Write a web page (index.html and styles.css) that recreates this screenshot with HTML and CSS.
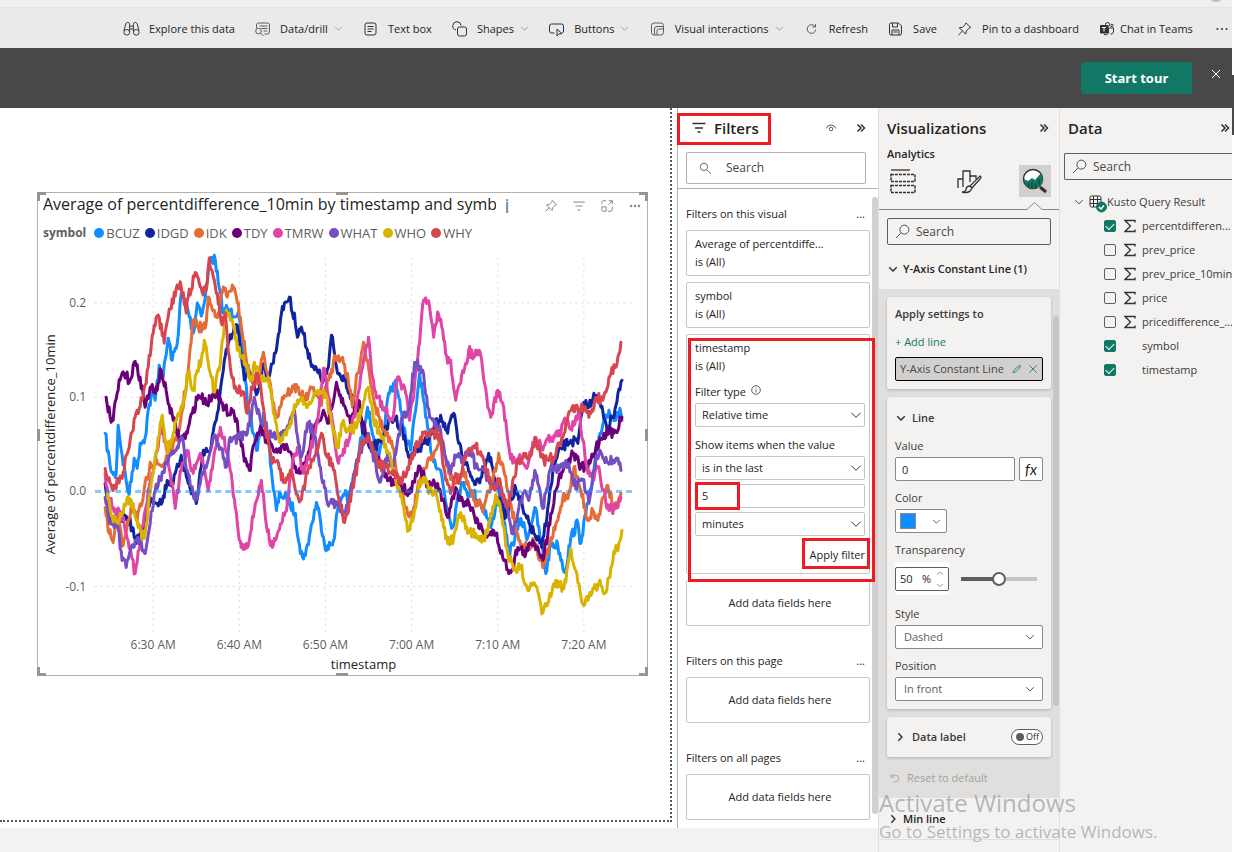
FILE: index.html
```html
<!DOCTYPE html>
<html lang="en">
<head>
<meta charset="utf-8">
<title>Report editor</title>
<link rel="stylesheet" href="styles.css">
</head>
<body>
<svg class="defs" aria-hidden="true">
  <symbol id="chev" viewBox="0 0 12 12"><path d="M1.5 3.8 6 8.3l4.500-4.500"/></symbol>
  <symbol id="chev-right" viewBox="0 0 12 12"><path d="M4 1.500 8.300 6 4 10.500"/></symbol>
  <symbol id="dbl" viewBox="0 0 10 10"><path d="M1.500 1.500 5 5 1.500 8.500M5 1.500 8.500 5 5 8.500"/></symbol>
  <symbol id="lens" viewBox="0 0 16 16"><circle cx="10" cy="6" r="4.800"/><path d="M6.500 9.500 1 15"/></symbol>
  <symbol id="pin" viewBox="0 0 16 16"><path d="M9.500 1.800 14.200 6.500 12.500 7.200 9.800 10l-.6 3.200L2.800 6.800 6 6.200 8.800 3.500zM6 10 1.800 14.200"/></symbol>
  <symbol id="sigma" viewBox="0 0 12 14"><path d="M11 3.500V1.500H1L6.500 7 1 12.500h10v-2"/></symbol>
</svg>
<div class="app">
  <div class="strip"><span class="avatar"></span></div>
  <nav class="toolbar" aria-label="Report tools">
    <button><svg class="ic" viewBox="0 0 18 16"><path d="M1 10 3 2.500Q3.500 1 5 1t2 1.500V11M17 10 15 2.500Q14.500 1 13 1t-2 1.500V11M7 5h4M7 8h4"/><circle cx="4" cy="11.500" r="3"/><circle cx="14" cy="11.500" r="3"/></svg>Explore this data</button>
    <button><svg class="ic light" viewBox="0 0 16 16"><path d="M2 7V4q0-2 2-2h9q2 0 2 2v7q0 2-2 2h-3M5 5h8M7 7.500h6M9 10h4"/><circle cx="4" cy="10" r="2.800"/><path d="m6 12 3 3"/></svg>Data/drill<svg class="chev"><use href="#chev"/></svg></button>
    <button><svg class="ic" viewBox="0 0 16 16"><rect x="2.500" y="2" width="11" height="12" rx="2"/><path d="M5 5.500h6M5 8h6M5 10.500h4"/></svg>Text box</button>
    <button><svg class="ic" viewBox="0 0 16 16"><path d="M4.500 9A4.200 4.200 0 1 1 9.600 4.500"/><rect x="6" y="6" width="9" height="9" rx="2"/></svg>Shapes<svg class="chev"><use href="#chev"/></svg></button>
    <button><svg class="ic" viewBox="0 0 16 16"><path d="M6 12H3q-2 0-2-2V5q0-2 2-2h10q2 0 2 2v5q0 1.500-1.500 2M8.500 8v7l2-2.200h3z"/></svg>Buttons<svg class="chev"><use href="#chev"/></svg></button>
    <button><svg class="ic light" viewBox="0 0 16 16"><path d="M4.500 14Q2 14 2 11.500v-7Q2 2 4.500 2h7Q14 2 14 4.500V11.500Q14 14 11.500 14zM5 13.500V8Q5 5.500 7.500 5.500H14"/><path d="M7.500 14V9.500Q7.500 8 9 8h5"/></svg>Visual interactions<svg class="chev"><use href="#chev"/></svg></button>
    <button><svg class="ic light" viewBox="0 0 16 16"><path d="M11.500 5.500A4.300 4.300 0 1 0 12.300 8.500M12 3v3H9"/></svg>Refresh</button>
    <button><svg class="ic" viewBox="0 0 16 16"><path d="M2 3.500Q2 2 3.500 2H11l3 3v7.500q0 1.500-1.500 1.500h-9Q2 14 2 12.500zM5 2v4h5V2M4.500 14V9h7v5M6 11h4"/></svg>Save</button>
    <button><svg class="ic"><use href="#pin"/></svg>Pin to a dashboard</button>
    <button class="teams"><svg class="ic" viewBox="0 0 16 16"><circle cx="9" cy="3.500" r="2"/><circle cx="13.500" cy="4.500" r="1.300"/><path d="M9 7h6v4q-1 2.500-3 2M10 7v5q-1.500 3-4.500 1.500"/><path class="solid" d="M2 4.500h7v7.500H2z"/><path class="inv" d="M3.500 6.500h4M5.500 6.500v4"/></svg>Chat in Teams</button>
    <button aria-label="More"><svg class="dots" viewBox="0 0 12 4"><circle cx="1.500" cy="2" r="1"/><circle cx="6" cy="2" r="1"/><circle cx="10.500" cy="2" r="1"/></svg></button>
  </nav>
  <div class="banner">
    <button class="tour">Start tour</button>
    <button class="close" aria-label="Close"><svg viewBox="0 0 10 10"><path d="m1 1 8 8M9 1 1 9"/></svg></button>
  </div>
  <main class="main">
    <div class="left">
      <div class="work">
        <section class="canvas">
          <article class="visual">
            <span class="h tl"></span><span class="h tc"></span><span class="h tr"></span><span class="h ml"></span><span class="h mr"></span><span class="h bl"></span><span class="h bc"></span><span class="h br"></span>
            <header class="vhead">
              <h2>Average of percentdifference_10min by timestamp and symbol</h2>
              <span class="info">i</span>
              <span class="vtools">
                <svg class="g"><use href="#pin"/></svg>
                <svg class="g" viewBox="0 0 16 16"><path d="M1.500 3.500h13M4 8h8M6.500 12.500h3"/></svg>
                <svg class="g" viewBox="0 0 16 16"><path d="M7 2H4Q2 2 2 4v2M14 9v3q0 2-2 2H9M10 2h4v4M14 2 9.500 6.500M2 9h5v5H4q-2 0-2-2z"/></svg>
                <svg class="g fill" viewBox="0 0 16 16"><circle cx="3.500" cy="8" r="1.400"/><circle cx="8" cy="8" r="1.400"/><circle cx="12.500" cy="8" r="1.400"/></svg>
              </span>
            </header>
            <ul class="legend">
              <li class="name">symbol</li>
              <li><i class="c-bcuz"></i>BCUZ</li><li><i class="c-idgd"></i>IDGD</li><li><i class="c-idk"></i>IDK</li><li><i class="c-tdy"></i>TDY</li><li><i class="c-tmrw"></i>TMRW</li><li><i class="c-what"></i>WHAT</li><li><i class="c-who"></i>WHO</li><li><i class="c-why"></i>WHY</li>
            </ul>
            <svg class="plot" id="plot" viewBox="38 243 608 431" role="img" aria-label="Line chart of average percent difference over time, by symbol">
              <path class="grid" d="M153 258V636M239 258V636M325 258V636M411 258V636M497 258V636M583 258V636M95 303H631M95 397H631M95 586H631"/>
              <g class="ytick"><text x="86" y="307">0.2</text><text x="86" y="401">0.1</text><text x="86" y="495">0.0</text><text x="86" y="590">-0.1</text></g>
              <g class="xtick"><text x="153" y="648">6:30 AM</text><text x="239" y="648">6:40 AM</text><text x="325" y="648">6:50 AM</text><text x="411" y="648">7:00 AM</text><text x="497" y="648">7:10 AM</text><text x="583" y="648">7:20 AM</text></g>
              <text class="atitle" x="363" y="668">timestamp</text>
              <text class="atitle" transform="translate(55 444) rotate(-90)">Average of percentdifference_10min</text>
              <g id="lines"></g>
              <path class="zero" d="M95 491H631"/>
            </svg>
          </article>
        </section>
        <aside class="filters">
          <header class="fhead">
            <svg class="fi" viewBox="0 0 16 16"><path d="M1.500 3.500h13M4 8h8M6.500 12h3"/></svg>
            <h2>Filters</h2>
            <svg class="eye" viewBox="0 0 12 10"><path d="M1 5.500Q2.500 2 6 2t5 3.500"/><circle cx="6" cy="6" r="1.800"/></svg>
            <svg class="dbl"><use href="#dbl"/></svg>
            <span class="mark mark-title"></span>
          </header>
          <label class="search fsearch"><svg viewBox="0 0 16 16"><circle cx="6" cy="6" r="4.500"/><path d="m9.500 9.500 5 5"/></svg><input type="text" placeholder="Search"></label>
          <div class="fbody">
            <section class="fsec">
              <h3>Filters on this visual<button aria-label="More">...</button></h3>
              <div class="fcard"><p>Average of percentdiffe...</p><p>is (All)</p></div>
              <div class="fcard"><p>symbol</p><p>is (All)</p></div>
              <div class="fcard open">
                <p>timestamp</p><p>is (All)</p>
                <label class="flabel" for="ftype">Filter type <svg viewBox="0 0 10 10"><circle cx="5" cy="5" r="4.300"/><path d="M5 4.500V7.500M5 2.500v1"/></svg></label>
                <span class="sel"><select id="ftype"><option>Relative time</option></select><svg><use href="#chev"/></svg></span>
                <label class="flabel two" for="fwhen">Show items when the value</label>
                <span class="sel"><select id="fwhen"><option>is in the last</option></select><svg><use href="#chev"/></svg></span>
                <span class="num"><input type="text" value="5" aria-label="Amount"><span class="mark mark-num"></span></span>
                <span class="sel"><select aria-label="Unit"><option>minutes</option></select><svg><use href="#chev"/></svg></span>
                <button class="apply">Apply filter<span class="mark mark-apply"></span></button>
                <span class="mark mark-card"></span>
              </div>
              <div class="fcard drop">Add data fields here</div>
            </section>
            <section class="fsec">
              <h3>Filters on this page<button aria-label="More">...</button></h3>
              <div class="fcard drop">Add data fields here</div>
            </section>
            <section class="fsec">
              <h3>Filters on all pages<button aria-label="More">...</button></h3>
              <div class="fcard drop">Add data fields here</div>
            </section>
            <span class="bar fbar"></span>
          </div>
        </aside>
      </div>
      <div class="foot"></div>
    </div>
    <aside class="viz">
      <header class="phead"><h2>Visualizations</h2><svg class="dbl"><use href="#dbl"/></svg></header>
      <h3 class="sub">Analytics</h3>
      <div class="tabs">
        <button aria-label="Build visual"><svg viewBox="0 0 32 32"><path class="t2" d="M4 5h19"/><path class="dash" d="M4 9.500h24v7H4zM4 20.500h24v7H4z"/></svg></button>
        <button aria-label="Format visual"><svg viewBox="0 0 32 32"><path d="M5 23V14h5M10 22V6h7v11M17 11h6v3M27 11q2 1 0 3l-8 9-2-2zM17 21q-4 0-4 4-1 2-4 2 8 2 10-4"/></svg></button>
        <button class="on" aria-label="Analytics"><svg viewBox="0 0 32 32"><circle class="disc" cx="14" cy="14" r="9.500"/><path class="area" d="M5 14l4 2 4-3 3 2 6-7q4 7-1 13-6 5-12 1-4-3-4-8z"/><path class="bars" d="M9.500 18v4M13 17v6M16.500 18v5M20 14v6"/><path class="hand" d="m21 22 6 5"/></svg></button>
      </div>
      <svg class="notch" viewBox="0 0 181 9" preserveAspectRatio="xMaxYMid slice"><path d="M-400 8.500H149L156.500 1.500 164 8.500H190"/></svg>
      <label class="search vsearch"><svg><use href="#lens"/></svg><input type="text" placeholder="Search"></label>
      <button class="sect"><svg class="chev2"><use href="#chev"/></svg>Y-Axis Constant Line (1)</button>
      <div class="settings">
        <div class="card apply-to">
          <h4>Apply settings to</h4>
          <button class="add">+ Add line</button>
          <button class="chip"><span>Y-Axis Constant Line 1</span><svg viewBox="0 0 12 12"><path d="m1.500 10.500.8-2.800 6-6q1-.7 1.800.2.700.8 0 1.600L4.200 9.700zM7.500 3l1.600 1.600"/></svg><svg viewBox="0 0 12 12"><path d="m1.500 1.500 9 9M10.500 1.500l-9 9"/></svg></button>
        </div>
        <div class="card line">
          <h4><svg class="chev2"><use href="#chev"/></svg>Line</h4>
          <label for="val">Value</label>
          <div class="row"><input id="val" class="box" type="text" value="0"><button class="fx" aria-label="Conditional formatting"><i>fx</i></button></div>
          <label for="col">Color</label>
          <button id="col" class="color"><i></i><svg><use href="#chev"/></svg></button>
          <label for="tra">Transparency</label>
          <div class="row trans">
            <span class="pct"><input id="tra" type="text" value="50"><b>%</b><svg viewBox="0 0 8 20"><path d="M1 5.500 4 3l3 2.500M1 15l3 2.500L7 15"/></svg></span>
            <input class="slider" type="range" value="50" aria-label="Transparency slider">
          </div>
          <label class="after" for="sty">Style</label>
          <span class="sel dark"><select id="sty"><option>Dashed</option></select><svg><use href="#chev"/></svg></span>
          <label for="pos">Position</label>
          <span class="sel dark"><select id="pos"><option>In front</option></select><svg><use href="#chev"/></svg></span>
        </div>
        <div class="card dlabel"><svg class="chev2"><use href="#chev-right"/></svg><h4>Data label</h4><button class="toggle" role="switch" aria-checked="false"><i></i>Off</button></div>
        <button class="reset"><svg viewBox="0 0 12 12"><path d="M1.500 1v4h4M1.500 5q0-2.500 5-2.500 4 .5 4 4t-4 4H4"/></svg>Reset to default</button>
        <span class="bar vbar"></span>
      </div>
      <button class="sect min"><svg class="chev2"><use href="#chev-right"/></svg>Min line</button>
    </aside>
    <aside class="data">
      <header class="phead"><h2>Data</h2><svg class="dbl"><use href="#dbl"/></svg></header>
      <label class="search dsearch"><svg><use href="#lens"/></svg><input type="text" placeholder="Search"></label>
      <div class="table"><svg class="tchev"><use href="#chev"/></svg><svg class="tico" viewBox="0 0 18 18"><rect x="1" y="1" width="11" height="11" rx="1.500"/><path d="M1 4.500h11M1 8.500h11M4.500 1v11M8.500 1v11"/><circle cx="12.500" cy="12" r="5"/><path class="w" d="m10 12 2 2 3-3.500"/></svg>Kusto Query Result</div>
      <label class="field"><input type="checkbox" checked><svg><use href="#sigma"/></svg><span>percentdifferen...</span></label>
      <label class="field"><input type="checkbox"><svg><use href="#sigma"/></svg><span>prev_price</span></label>
      <label class="field"><input type="checkbox"><svg><use href="#sigma"/></svg><span>prev_price_10min</span></label>
      <label class="field"><input type="checkbox"><svg><use href="#sigma"/></svg><span>price</span></label>
      <label class="field"><input type="checkbox"><svg><use href="#sigma"/></svg><span>pricedifference_...</span></label>
      <label class="field"><input type="checkbox" checked><svg></svg><span>symbol</span></label>
      <label class="field"><input type="checkbox" checked><svg></svg><span>timestamp</span></label>
    </aside>
  </main>
  <div class="watermark"><strong>Activate Windows</strong><span>Go to Settings to activate Windows.</span></div>
</div>
<script src="chart.js"></script>
</body>
</html>
```
FILE: styles.css
```css
* { box-sizing: border-box; }
body { margin: 0; font-family: "Open Sans", "Noto Sans", sans-serif; font-size: 12px; line-height: 18px; color: #252423; background: #fff; }
h2, h3, h4, p, ul { margin: 0; padding: 0; font-size: inherit; font-weight: 400; list-style: none; }
button, input, select { font: inherit; color: inherit; background: none; border: 0; padding: 0; margin: 0; min-width: 0; }
button { white-space: nowrap; text-align: left; }
svg { fill: none; stroke: #323130; stroke-width: 1; flex: none; }
.defs { display: block; width: 0; height: 0; }
.app { position: relative; display: flex; flex-direction: column; min-height: 100vh; padding-right: 2px; overflow: hidden; background: linear-gradient(#fff 75px, #484848 75px, #484848 135px, #fff 135px); }

.strip { display: flex; justify-content: flex-end; height: 8px; padding-right: 8px; background: #f0f0f0; border-bottom: 1px solid #e2e2e2; overflow: hidden; }
.avatar { width: 16px; height: 16px; margin-top: -14px; border-radius: 8px; background: #bdbdbd; }
.toolbar { display: flex; align-items: center; justify-content: space-between; height: 40px; padding: 1px 4px 0 123px; background: #eaeaea; font-size: 11px; }
.toolbar button { display: flex; align-items: center; gap: 9px; }
.toolbar .teams { gap: 5px; margin-right: 4px; }
.ic { width: 17px; height: 16px; }
.ic.light { stroke: #605e5c; }
.ic .solid { fill: #323130; }
.ic .inv { stroke: #fff; }
.chev { width: 9px; height: 9px; stroke: #8a8886; margin-left: -3px; }
.dots { width: 12px; height: 4px; fill: #323130; stroke: none; }
.banner { display: flex; justify-content: flex-end; align-items: center; gap: 19px; height: 60px; padding-right: 11px; background: #484848; }
.tour { height: 32px; width: 111px; border-radius: 3px; background: #117865; color: #fff; font-weight: 700; font-size: 13px; text-align: center; }
.close svg { display: block; width: 10px; height: 10px; margin-bottom: 8px; stroke: #fff; }

.main { flex: 1; display: flex; background: #fff; }
.left { flex: 1; min-width: 0; display: flex; flex-direction: column; }
.work { flex: 1; display: flex; }
.foot { height: 24px; background: #f3f2f1; }
.canvas { flex: 1; min-width: 0; margin: 0 5px 6px 0; padding: 84px 22px 0 37px; border-right: 2px dotted #555; border-bottom: 2px dotted #555; }
.visual { position: relative; border: 1px solid #b3b0ad; }
.h { position: absolute; width: 9px; height: 9px; border: 0 solid #979593; }
.tl { left: -1px; top: -1px; border-width: 3px 0 0 3px; }
.tr { right: -1px; top: -1px; border-width: 3px 3px 0 0; }
.bl { left: -1px; bottom: -1px; border-width: 0 0 3px 3px; }
.br { right: -1px; bottom: -1px; border-width: 0 3px 3px 0; }
.tc { left: 49%; top: -1px; width: 12px; height: 3px; background: #979593; }
.bc { left: 49%; bottom: -1px; width: 12px; height: 3px; background: #979593; }
.ml { left: -1px; top: 49%; width: 3px; height: 12px; background: #979593; }
.mr { right: -1px; top: 49%; width: 3px; height: 12px; background: #979593; }
.vhead { display: flex; align-items: center; height: 26px; padding: 0 5px; }
.vhead h2 { flex: 1; min-width: 0; overflow: hidden; white-space: nowrap; font-size: 16px; line-height: 22px; margin-bottom: 4px; color: #252423; }
.info { width: 10px; margin: 0 32px 0 6px; text-align: center; font: 20px/20px "Open Sans", sans-serif; color: #5b7fa3; }
.vtools { display: flex; gap: 14px; }
.g { width: 14px; height: 14px; stroke: #777; }
.g.fill { fill: #8a8886; stroke: none; }
.legend { display: flex; height: 24px; align-items: center; padding: 3px 0 0 5px; gap: 5px; color: #605e5c; font-size: 13px; }
.legend li { display: flex; align-items: center; gap: 2px; }
.legend .name { font-weight: 700; font-size: 12px; margin-right: 3px; }
.legend i { width: 10px; height: 10px; border-radius: 5px; }
.c-bcuz { background: #118dff; } .c-idgd { background: #12239e; } .c-idk { background: #e66c37; } .c-tdy { background: #6b007b; }
.c-tmrw { background: #e044a7; } .c-what { background: #744ec2; } .c-who { background: #d9b300; } .c-why { background: #d64550; }
.plot { display: block; width: 100%; height: auto; }
.plot text { stroke: none; fill: #605e5c; font-size: 12px; }
.plot .ytick { text-anchor: end; }
.plot .xtick, .plot .atitle { text-anchor: middle; }
.plot .atitle { fill: #252423; font-size: 13px; }
.grid { stroke: #dcdcdc; stroke-dasharray: 1 5; stroke-linecap: square; }
.zero { stroke: #118dff; stroke-opacity: .5; stroke-width: 3; stroke-dasharray: 6 4; }
.ln { stroke-width: 3; stroke-linejoin: round; stroke-linecap: round; }

.filters { width: 201px; border-left: 1px solid #b3b0ad; background: #fff; display: flex; flex-direction: column; font-size: 11px; }
.fhead { position: relative; display: flex; align-items: center; height: 40px; padding: 0 12px 0 13px; }
.fhead h2 { flex: 1; font-size: 15px; margin-left: 7px; font-weight: 600; }
.fi { width: 16px; height: 16px; stroke-width: 1.500; }
.eye { width: 12px; height: 10px; margin-right: 19px; stroke: #605e5c; }
.dbl { width: 10px; height: 10px; stroke-width: 1.500; }
.mark { position: absolute; border: 3px solid #ed1c24; pointer-events: none; z-index: 2; }
.mark-title { left: -1px; top: 5px; width: 94px; height: 32px; }
.search { display: flex; align-items: center; border: 1px solid #605e5c; border-radius: 2px; background: #fff; }
.search input { flex: 1; outline: 0; }
.search input::placeholder { color: #484644; opacity: 1; }
.fsearch { margin: 4px 12px 4px 8px; height: 32px; border-color: #b3b0ad; padding-left: 12px; gap: 14px; font-size: 12px; }
.fsearch svg { width: 13px; height: 13px; }
.fbody { position: relative; flex: 1; border-top: 1px solid #b3b0ad; padding: 16px 8px 8px 8px; display: flex; flex-direction: column; gap: 26px; }
.fsec { display: flex; flex-direction: column; gap: 6px; }
.fsec h3 { display: flex; justify-content: space-between; padding-right: 5px; margin-bottom: 1px; }
.fcard { position: relative; min-height: 46px; border: 1px solid #c8c6c4; border-radius: 2px; padding: 4px 4px 4px 8px; display: flex; flex-direction: column; }
.fcard.open { padding-bottom: 9px; }
.drop { align-items: center; justify-content: center; }
.flabel { margin: 8px 0 2px; }
.flabel.two { margin-top: 9px; }
.flabel svg { width: 10px; height: 10px; stroke: #605e5c; margin: 0 0 1px 2px; }
.sel { display: grid; align-items: center; height: 24px; border: 1px solid #c8c6c4; border-radius: 2px; background: #fff; }
.sel select, .sel svg { grid-area: 1 / 1; }
.sel select { appearance: none; width: 100%; padding-left: 6px; }
.sel svg { justify-self: end; width: 12px; height: 12px; margin-right: 2px; pointer-events: none; }
.num { position: relative; display: flex; height: 24px; margin: 4px 0; }
.num input { flex: 1; border: 1px solid #c8c6c4; border-radius: 2px; padding-left: 6px; }
.mark-num { left: 0; top: -2px; width: 45px; height: 28px; }
.apply { position: relative; align-self: flex-end; margin-top: 10px; }
.mark-apply { left: -8px; right: -5px; top: -8px; height: 31px; }
.mark-card { left: 1px; top: 3px; right: -6px; bottom: -9px; }
.bar { position: absolute; border-radius: 3px; }
.fbar { right: 0; top: 8px; bottom: 14px; width: 6px; background: #d2d0ce; }

.viz { width: 181px; background: #f3f2f1; border-left: 1px solid #e1dfdd; display: flex; flex-direction: column; font-size: 12px; }
.phead { display: flex; align-items: center; justify-content: space-between; height: 40px; padding: 0 10px 0 8px; }
.phead h2 { font-size: 15px; font-weight: 600; }
.sub { padding: 0 8px; margin: -3px 0 0; font-size: 11px; font-weight: 600; }
.tabs { display: flex; justify-content: space-between; padding: 2px 8px 0; }
.tabs button { width: 32px; height: 32px; }
.tabs svg { display: block; width: 32px; height: 32px; stroke-width: 1.300; }
.tabs .on { background: #d2d0ce; }
.tabs .dash { stroke-dasharray: 3 1; stroke-width: 1.500; }
.disc { fill: #fff; stroke-width: 1.500; }
.area { fill: #117865; stroke: none; }
.bars { stroke: #0a4d40; stroke-width: 1.500; }
.hand { stroke-width: 3; }
.notch { display: block; width: 100%; height: 9px; margin-top: 4px; stroke: #8a8886; }
.vsearch { margin: 8px 8px 0; height: 27px; padding-left: 7px; gap: 6px; background: none; }
.search svg { stroke: #484644; }
.vsearch svg, .dsearch svg { width: 15px; height: 15px; }
.sect { display: flex; align-items: center; gap: 5px; padding: 0 9px; height: 40px; margin-top: 4px; font-size: 11px; font-weight: 600; }
.chev2 { width: 10px; height: 10px; stroke-width: 1.700; }
.settings { position: relative; background: #e1dfdd; padding: 8px 8px 0; display: flex; flex-direction: column; gap: 8px; height: 509px; }
.card { background: #f3f2f1; border-radius: 3px; padding: 8px; display: flex; flex-direction: column; box-shadow: 0 1px 3px #0003; font-size: 11px; }
.card h4 { display: flex; align-items: center; gap: 6px; font-weight: 600; color: #3b3a39; }
.apply-to { height: 92px; }
.apply-to .add { margin: 10px 0 6px; color: #117865; font-size: 11px; }
.chip { display: flex; align-items: center; gap: 6px; height: 24px; padding: 0 4px; border: 1px solid #000; border-radius: 2px; background: #d2d0ce; color: #484644; }
.chip span { flex: 1; min-width: 0; overflow: hidden; }
.chip svg { width: 10px; height: 10px; stroke: #117865; }
.line { padding-top: 12px; }
.line h4 { margin: 0 1px 2px; }
.line label { margin: 8px 0 2px; color: #3b3a39; }
.row { display: flex; gap: 4px; }
.box { flex: 1; height: 24px; border: 1px solid #8a8886; border-radius: 2px; background: #fff; padding-left: 6px; }
.fx { width: 24px; height: 24px; border: 1px solid #8a8886; border-radius: 2px; background: #fff; text-align: center; font: italic 15px/18px Lato, "Open Sans", sans-serif; }
.color { display: flex; align-items: center; gap: 16px; align-self: flex-start; width: 52px; height: 24px; padding-left: 4px; border: 1px solid #8a8886; border-radius: 2px; background: #fff; }
.color i { width: 16px; height: 16px; background: #118dff; border: 1px solid #8a8886; }
.color svg { width: 9px; height: 9px; }
.trans { margin-top: 2px; gap: 12px; align-items: center; }
.pct { display: flex; align-items: center; width: 54px; height: 24px; margin: 4px 0; padding: 0 4px; border: 1px solid #605e5c; border-radius: 2px; background: #fff; box-shadow: 0 -5px #fff, 0 4px #fff; }
.pct input { width: 22px; }
.pct b { flex: 1; font-weight: 400; }
.pct svg { width: 8px; height: 20px; stroke: #a19f9d; }
.slider { appearance: none; flex: 1; height: 14px; margin-right: 6px; background: linear-gradient(90deg, #605e5c 50%, #c8c6c4 50%) center / 100% 4px no-repeat; }
.slider::-webkit-slider-thumb { appearance: none; width: 14px; height: 14px; border: 2px solid #605e5c; border-radius: 7px; background: #fff; }
.line .after { margin-top: 10px; }
.sel.dark { height: 24px; border-color: #8a8886; color: #605e5c; }
.sel.dark select { padding-left: 8px; }
.sel.dark svg { width: 10px; height: 10px; margin-right: 7px; }
.dlabel { flex-direction: row; align-items: center; height: 40px; gap: 7px; }
.dlabel h4 { flex: 1; }
.toggle { display: flex; align-items: center; gap: 2px; width: 32px; height: 16px; padding-left: 4px; border: 1px solid #605e5c; border-radius: 8px; background: #fff; font-size: 9px; }
.toggle i { width: 8px; height: 8px; border-radius: 4px; background: #605e5c; }
.reset { display: flex; align-items: center; gap: 7px; padding: 4px 3px; color: #a19f9d; font-size: 11px; }
.reset svg { width: 10px; height: 10px; stroke: #a19f9d; }
.vbar { right: 0; top: 27px; width: 6px; height: 390px; background: #c8c6c4; }
.sect.min { height: 42px; margin: 0; border-bottom: 1px solid #e1dfdd; }

.data { width: 173px; background: #f3f2f1; border-left: 1px solid #e1dfdd; overflow: hidden; font-size: 12px; }
.data .phead { padding-right: 2px; }
.dsearch { margin: 5px 0 0 4px; height: 27px; padding-left: 7px; gap: 6px; border-right: 0; border-radius: 2px 0 0 2px; background: none; }
.table { display: flex; align-items: center; margin-top: 10px; padding-left: 14px; height: 24px; white-space: nowrap; font-size: 11px; color: #3b3a39; }
.tchev { width: 10px; height: 10px; margin-right: 5px; }
.tico { width: 18px; height: 18px; margin-top: 4px; }
.tico circle { fill: #117865; stroke: #117865; }
.tico .w { stroke: #fff; stroke-width: 1.500; }
.field { display: flex; align-items: center; height: 24px; padding-left: 44px; white-space: nowrap; font-size: 11px; color: #3b3a39; }
.field input { appearance: none; flex: none; width: 12px; height: 12px; border: 1px solid #605e5c; border-radius: 2px; display: grid; place-items: center; }
.field input:checked { background: #117865; border-color: #117865; }
.field input:checked::after { content: ""; width: 7px; height: 4px; border: solid #fff; border-width: 0 0 1px 1px; rotate: -45deg; margin-bottom: 2px; }
.field svg { width: 12px; height: 14px; margin: 0 6px 0 8px; stroke-width: 1.300; }

.watermark { position: absolute; left: 879px; bottom: 8px; display: flex; flex-direction: column; color: #8c8c8c99; white-space: nowrap; pointer-events: none; }
.watermark strong { font-weight: 400; font-size: 24px; line-height: 34px; }
.watermark span { font-size: 17px; line-height: 24px; }
```
FILE: chart.js
```js
// Each series: [x, y] knots in plot units; small deterministic tick noise is added between them.
const series = [
  ["#118DFF", "105,433 110,466 113,474 116,474 118,425 122,455 126,480 129,494 134,458 137,468 140,443 145,437 148,410 152,393 155,400 159,365 163,377 168,338 172,360 177,343 181,293 187,307 193,333 197,303 202,313 204,303 210,258 215,260 218,283 223,313 227,308 230,313 238,312 242,347 247,400 253,433 257,450 260,430 263,413 268,437 272,480 276,510 280,493 288,500 295,513 300,553 305,555 310,530 316,502 320,520 326,550 333,540 338,503 345,490 348,503 350,490 357,460 363,425 367,407 373,437 378,460 383,437 388,393 395,380 400,410 405,437 410,450 415,410 419,373 425,417 432,457 440,470 446,507 452,527 457,497 463,482 468,493 473,493 483,507 490,527 497,497 503,520 508,553 512,543 520,518 527,537 534,507 540,540 545,573 550,543 557,545 564,572 570,537 577,522 579,543 585,513 592,480 598,437 603,420 608,410 615,420 619,408 621,420"],
  ["#12239E", "105,483 110,523 117,517 127,517 132,527 136,543 145,520 150,497 162,502 167,480 173,483 181,455 188,483 196,503 203,450 210,450 217,413 223,370 228,343 237,325 240,350 244,380 248,367 257,393 262,367 268,377 275,353 280,320 284,303 289,297 292,313 294,313 297,337 301,327 307,350 313,367 323,380 328,367 331,335 337,373 345,377 348,393 355,407 363,433 372,448 380,440 390,420 395,418 402,430 408,457 418,447 428,440 440,415 447,433 453,413 458,443 465,463 472,480 478,480 488,453 495,480 505,517 510,497 515,488 523,513 533,533 541,547 547,507 553,467 560,448 570,440 577,443 583,402 588,407 593,393 600,407 607,427 612,417 617,393 621,380"],
  ["#E66C37", "105,507 108,530 113,542 118,515 122,546 128,520 132,504 137,520 143,497 150,462 163,465 168,453 177,440 182,410 188,370 193,320 198,327 205,328 208,297 212,310 218,313 223,287 227,297 232,285 237,303 240,317 245,353 250,380 258,380 263,352 268,380 277,417 282,397 290,390 297,387 305,400 313,387 320,403 328,380 335,357 342,357 348,383 352,407 357,373 363,342 368,367 375,407 383,430 392,447 398,483 403,500 411,517 417,487 427,460 435,450 442,440 448,473 455,483 463,470 473,500 483,507 492,480 498,453 503,470 510,503 518,540 527,547 533,540 542,567 548,547 557,520 562,497 568,493 573,467 580,490 587,520 592,510 597,520 602,497 607,485 612,503 617,507 620,493"],
  ["#6B007B", "106,397 110,417 113,420 117,393 122,373 130,380 134,362 140,377 145,407 150,387 155,393 161,370 167,397 173,420 180,440 187,433 192,413 198,395 207,402 217,390 223,410 233,410 240,437 243,453 249,470 255,440 260,427 267,443 277,452 287,447 293,463 300,473 307,457 313,430 322,413 327,423 336,382 343,405 350,423 358,400 365,433 377,460 388,480 400,483 409,493 415,473 420,468 427,487 437,483 447,517 455,487 460,500 468,502 473,513 483,533 495,533 503,560 510,572 517,547 525,553 532,540 543,557 550,513 558,477 565,463 573,453 580,467 587,467 595,447 603,433 613,433 621,417"],
  ["#E044A7", "105,473 108,497 113,507 122,517 128,540 135,573 140,543 145,510 152,473 161,427 165,440 170,473 175,508 182,463 187,450 193,473 200,453 208,490 213,460 220,427 227,453 232,483 237,523 241,547 249,540 255,503 261,480 265,517 270,545 277,533 287,503 292,463 297,447 303,473 310,450 317,423 323,368 328,397 333,427 337,460 342,455 350,433 355,410 360,377 368,337 372,377 377,397 383,407 392,420 397,377 405,393 409,420 413,397 418,347 423,300 429,307 433,337 437,312 442,330 447,363 450,360 455,400 460,383 465,363 468,350 473,357 478,350 482,370 487,407 490,417 497,390 502,403 507,440 512,463 520,457 525,467 535,437 540,447 550,437 560,433 563,420 570,427 578,410 582,440 587,473 592,478 597,467 602,490 608,510 617,505 620,497"],
  ["#744EC2", "105,497 110,523 117,523 122,560 126,567 130,550 138,537 145,553 150,523 155,490 160,477 167,463 173,453 182,437 187,470 195,500 200,483 207,463 213,437 220,447 226,467 230,437 240,438 247,433 254,397 260,420 267,433 280,437 294,410 300,457 308,423 315,437 320,467 327,503 337,502 343,513 350,490 357,460 368,433 379,482 387,453 392,467 397,440 403,413 408,410 414,362 422,370 427,407 432,420 438,427 445,457 450,473 455,457 463,457 470,450 475,467 483,470 492,487 500,490 507,510 511,533 517,513 522,493 528,500 534,470 542,508 550,467 558,470 568,463 573,485 582,480 588,503 593,470 599,450 607,462 617,458 620,470"],
  ["#D9B300", "107,493 112,517 118,523 122,513 127,497 133,503 138,527 144,538 148,507 153,473 158,437 162,415 167,453 173,433 178,413 183,400 188,373 193,390 197,370 201,360 204,340 208,363 214,392 220,363 226,310 232,320 238,350 247,367 252,380 254,362 260,380 268,377 273,413 278,437 282,440 288,427 295,407 302,397 307,407 317,390 325,393 332,427 337,447 343,420 345,430 355,427 362,407 368,387 373,420 382,437 388,453 395,480 402,503 408,530 413,517 418,487 425,477 428,493 435,490 440,510 447,543 453,537 460,512 467,533 475,533 483,540 490,513 496,497 500,510 507,553 513,570 520,567 528,590 533,582 542,612 548,600 553,583 563,588 570,548 575,570 581,602 590,595 598,583 605,592 610,567 615,545 617,550 621,530"],
  ["#D64550", "105,468 108,480 113,490 118,478 122,478 126,455 130,440 137,410 143,397 148,367 153,333 158,315 164,343 168,317 177,285 181,287 186,313 188,297 194,277 198,278 202,293 207,283 209,258 213,277 217,293 221,323 225,313 227,337 230,367 234,388 243,392 247,413 252,387 257,373 261,393 265,427 272,463 277,460 283,482 290,470 295,490 300,500 307,473 313,460 321,433 327,457 332,463 338,497 344,522 353,487 360,447 367,437 377,463 383,467 393,470 399,483 407,467 413,453 420,437 430,430 440,437 443,467 450,493 455,473 458,483 465,457 474,445 483,460 492,488 498,480 507,507 512,480 518,460 527,457 535,440 543,460 553,457 562,437 570,410 575,405 585,410 590,413 595,397 602,400 608,377 615,367 620,342"]
];

let seed = 7;
const rand = () => (seed = (seed * 16807) % 2147483647) / 2147483647;

const group = document.getElementById("lines");
for (const [color, knots] of series) {
  const pts = knots.split(" ").map(p => p.split(",").map(Number));
  let d = "M" + pts[0].join(" ");
  for (let i = 1; i < pts.length; i++) {
    const [x0, y0] = pts[i - 1];
    const [x1, y1] = pts[i];
    for (let x = x0 + 1; x < x1; x++) {
      const y = y0 + (y1 - y0) * (x - x0) / (x1 - x0) + (rand() - 0.5) * 11;
      d += "L" + x + " " + y.toFixed(1);
    }
    d += "L" + x1 + " " + y1;
  }
  const path = document.createElementNS("http://www.w3.org/2000/svg", "path");
  path.setAttribute("d", d);
  path.setAttribute("class", "ln");
  path.setAttribute("stroke", color);
  group.appendChild(path);
}
```
